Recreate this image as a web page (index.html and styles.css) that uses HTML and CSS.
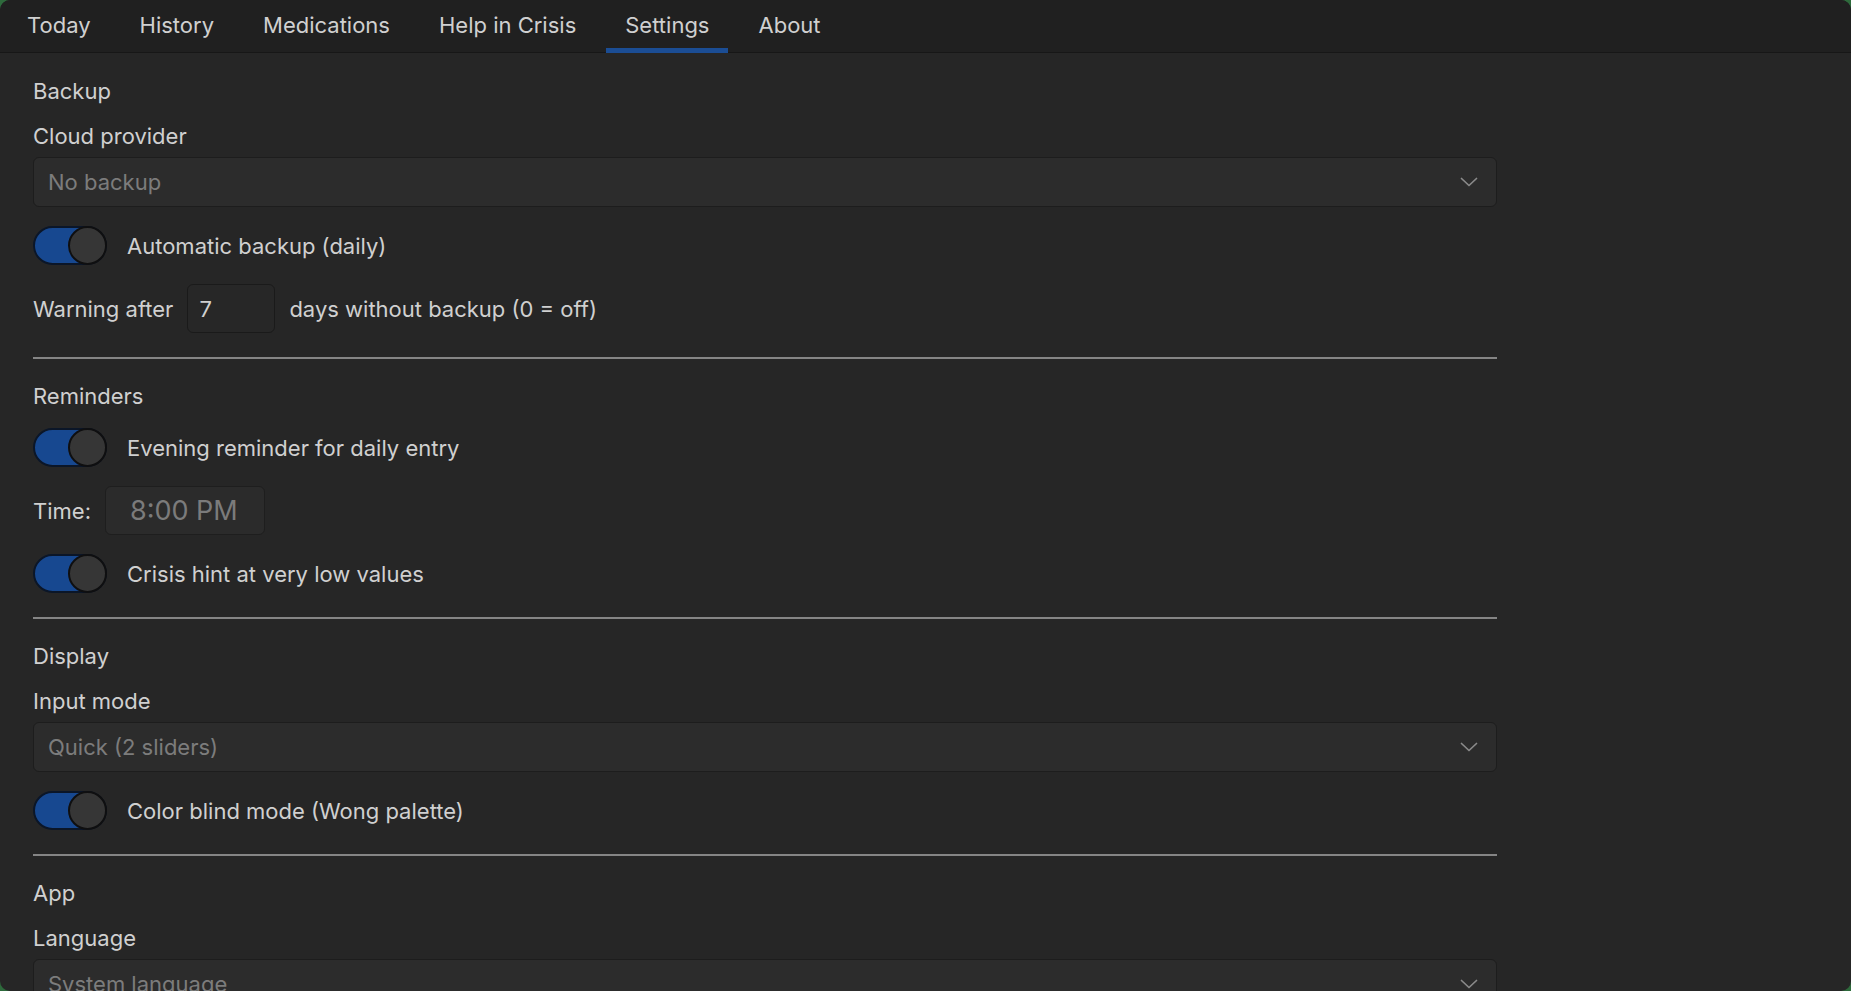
FILE: index.html
```html
<!DOCTYPE html>
<html lang="en">
<head>
<meta charset="utf-8">
<title>Settings</title>
<link rel="stylesheet" href="styles.css">
</head>
<body>
<div class="window">
  <nav class="tabs">
    <div class="tab">Today</div>
    <div class="tab">History</div>
    <div class="tab">Medications</div>
    <div class="tab">Help in Crisis</div>
    <div class="tab active">Settings</div>
    <div class="tab">About</div>
  </nav>
  <main class="settings">
    <div class="heading">Backup</div>
    <div class="field">
      <div class="label">Cloud provider</div>
      <div class="select">
        <span class="select-value">No backup</span>
        <svg class="chevron" width="18" height="10" viewBox="0 0 18 10"><path d="M1.5 1.5 L9 8.5 L16.5 1.5" fill="none" stroke="#8a8a8a" stroke-width="1.7" stroke-linecap="round" stroke-linejoin="round"/></svg>
      </div>
    </div>
    <div class="switch-row">
      <span class="switch"><span class="knob"></span></span>
      <span class="text">Automatic backup (daily)</span>
    </div>
    <div class="inline-row">
      <span class="text">Warning after</span>
      <div class="num-input">7</div>
      <span class="text">days without backup (0 = off)</span>
    </div>
    <div class="divider"></div>

    <div class="heading">Reminders</div>
    <div class="switch-row">
      <span class="switch"><span class="knob"></span></span>
      <span class="text">Evening reminder for daily entry</span>
    </div>
    <div class="inline-row">
      <span class="text">Time:</span>
      <div class="time-input">8:00 PM</div>
    </div>
    <div class="switch-row">
      <span class="switch"><span class="knob"></span></span>
      <span class="text">Crisis hint at very low values</span>
    </div>
    <div class="divider"></div>

    <div class="heading">Display</div>
    <div class="field">
      <div class="label">Input mode</div>
      <div class="select">
        <span class="select-value">Quick (2 sliders)</span>
        <svg class="chevron" width="18" height="10" viewBox="0 0 18 10"><path d="M1.5 1.5 L9 8.5 L16.5 1.5" fill="none" stroke="#8a8a8a" stroke-width="1.7" stroke-linecap="round" stroke-linejoin="round"/></svg>
      </div>
    </div>
    <div class="switch-row">
      <span class="switch"><span class="knob"></span></span>
      <span class="text">Color blind mode (Wong palette)</span>
    </div>
    <div class="divider"></div>

    <div class="heading">App</div>
    <div class="field">
      <div class="label">Language</div>
      <div class="select">
        <span class="select-value">System language</span>
        <svg class="chevron" width="18" height="10" viewBox="0 0 18 10"><path d="M1.5 1.5 L9 8.5 L16.5 1.5" fill="none" stroke="#8a8a8a" stroke-width="1.7" stroke-linecap="round" stroke-linejoin="round"/></svg>
      </div>
    </div>
  </main>
</div>
</body>
</html>
```

FILE: styles.css
```css
html, body {
  margin: 0;
  padding: 0;
  height: 100%;
}

html {
  background: #2e6a3c;
}

body {
  overflow: hidden;
  font-family: "Inter", "Noto Sans", sans-serif;
  font-size: 22px;
  line-height: 26px;
  color: #d2d2d2;
}

.window {
  height: 991px;
  background: #262626;
  border-radius: 10px;
  overflow: hidden;
}

.tabs {
  display: flex;
  gap: 11px;
  height: 53px;
  padding-left: 8px;
  background: #202020;
  border-bottom: 1px solid #171717;
  box-sizing: border-box;
}

.tab {
  position: relative;
  display: flex;
  align-items: center;
  padding: 0 19px 2px;
  color: #d0d0d0;
}

.tab.active::after {
  content: "";
  position: absolute;
  left: 0;
  right: 0;
  bottom: -1px;
  height: 5px;
  background: #1b4d94;
}

.settings {
  display: flex;
  flex-direction: column;
  gap: 19px;
  width: 1464px;
  padding: 25px 0 0 33px;
}

.heading, .label, .text {
  color: #d0d0d0;
  white-space: nowrap;
}

.field {
  display: flex;
  flex-direction: column;
  gap: 8px;
}

.select {
  display: flex;
  align-items: center;
  justify-content: space-between;
  height: 50px;
  box-sizing: border-box;
  padding: 0 18px 0 14px;
  background: #2c2c2c;
  border: 1px solid #1d1d1d;
  border-radius: 6px;
}

.select-value {
  color: #7c7c7c;
}

.chevron {
  display: block;
}

.switch-row {
  display: flex;
  align-items: center;
  gap: 20px;
}

.switch {
  display: flex;
  justify-content: flex-end;
  width: 74px;
  height: 39px;
  box-sizing: border-box;
  background: #174890;
  border: 2px solid #0b1628;
  border-radius: 20px;
}

.knob {
  width: 39px;
  height: 39px;
  margin: -2px;
  box-sizing: border-box;
  border-radius: 50%;
  background: #363636;
  border: 2px solid #0f0f10;
}

.inline-row {
  display: flex;
  align-items: center;
  gap: 14px;
}

.num-input {
  width: 88px;
  height: 49px;
  box-sizing: border-box;
  display: flex;
  align-items: center;
  padding-left: 11px;
  background: #272727;
  border: 1px solid #1a1a1a;
  border-radius: 6px;
  color: #d0d0d0;
}

.time-input {
  height: 49px;
  box-sizing: border-box;
  display: flex;
  align-items: center;
  padding: 0 26px 0 24px;
  background: #2b2b2b;
  border: 1px solid #1e1e1e;
  border-radius: 6px;
  font-size: 27px;
  color: #7b7b7b;
}

.divider {
  height: 2px;
  margin: 5px 0;
  background: #858585;
}
```
